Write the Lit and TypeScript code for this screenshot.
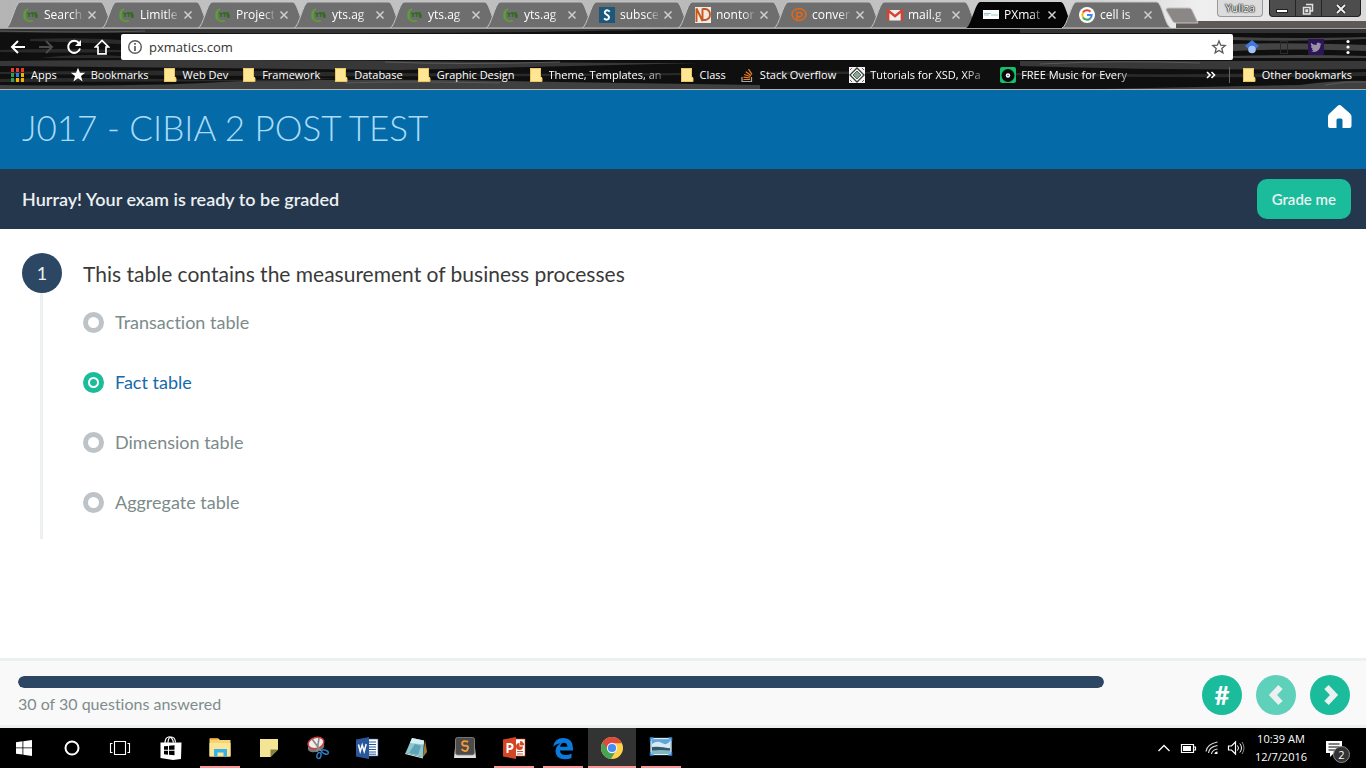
import { LitElement, html, svg, css, TemplateResult } from "lit";
import { customElement, state } from "lit/decorators.js";
import { classMap } from "lit/directives/class-map.js";

const icon = (w: number, h: number, body: TemplateResult | TemplateResult[]) =>
  html`<svg width=${w} height=${h} viewBox="0 0 ${w} ${h}" aria-hidden="true">${body}</svg>`;

const yts = icon(16, 16, svg`
  <path d="M5 2 A6.4 6.4 0 0 0 4 13.4 Q7 15 10 13.8" fill="none" stroke="#5aa52c" stroke-width="1.4"/>
  <path d="M2.6 4.5 A6 6 0 0 0 2.4 10.6" fill="none" stroke="#5aa52c" stroke-width="1.2"/>
  <path d="M4.4 5.6l1.6 2v2.4M7.5 5.6l-1.5 2M8 6h3M9.500 6v4M14 6h-2v2h2v2h-2.400" fill="none" stroke="#2f6b1c" stroke-width="1.400"/>`);
const subscene = icon(16, 16, svg`
  <rect width="16" height="16" fill="#1b587b"/>
  <path d="M10.800 4.600Q8 2.200 6.100 4.400Q5 6.500 8 7.800Q11 9.500 9.600 11.800Q7.500 13.600 5 11.600" fill="none" stroke="#fff" stroke-width="1.900"/>`);
const nd = icon(16, 16, svg`
  <rect width="16" height="16" fill="#eeeae6"/>
  <path d="M1.500 15V1.500L7.500 14V1.500M7.500 2h3q4.500 1 4.500 5.500T10.500 13H7.500" fill="none" stroke="#c9571c" stroke-width="1.900"/>`);
const conver = icon(16, 16, svg`
  <ellipse cx="8" cy="7.500" rx="7" ry="5.800" fill="none" stroke="#d9691c" stroke-width="1.700"/>
  <path d="M6 13.500V5.500h3q2.500.3 2 2.400t-3 1.900H6" fill="none" stroke="#d9691c" stroke-width="1.700"/>`);
const gmail = icon(16, 16, svg`
  <path d="M1 3h14v10.500H1z" fill="#f0f0f0"/>
  <path d="M1.200 14V3.500L8 9.200l6.800-5.700V14" fill="none" stroke="#d8412f" stroke-width="2.300"/>`);
const px = icon(16, 16, svg`
  <rect y="3" width="16" height="9" fill="#fff"/>
  <path d="M1 6.500h7M1 8h5M8 8h7" stroke="#9cc5c8" stroke-width="1"/>`);
const google = icon(16, 16, svg`
  <circle cx="8" cy="8" r="8" fill="#fff"/>
  <path d="M11.500 4.800A4.700 4.700 0 0 0 4 5.600" fill="none" stroke="#ea4335" stroke-width="2"/>
  <path d="M4 5.600A4.800 4.800 0 0 0 4 10.400" fill="none" stroke="#fbbc05" stroke-width="2"/>
  <path d="M4 10.400A4.700 4.700 0 0 0 11.200 11.400" fill="none" stroke="#34a853" stroke-width="2"/>
  <path d="M8 8h4.700q0 2-1.500 3.400" fill="none" stroke="#4285f4" stroke-width="2"/>`);

const folder = icon(16, 16, svg`
  <path d="M2 1h11v9h1v5H2z" fill="#ffe694"/>
  <path d="M2.500 1.500h10v8.500q1.500 0 1.500 1.500v3H2.500z" fill="none" stroke="#e9c75c" stroke-width="1"/>`);
const apps = icon(16, 16, [
  ["#e53935", 1, 1], ["#e53935", 6, 1], ["#e53935", 11, 1],
  ["#2e9e56", 1, 6], ["#2f7de1", 6, 6], ["#f0b400", 11, 6],
  ["#2e9e56", 1, 11], ["#f0b400", 6, 11], ["#f0b400", 11, 11],
].map(([c, x, y]) => svg`<rect x=${x} y=${y} width="3" height="4" fill=${c}/>`));
const starSolid = icon(16, 16, svg`<path d="M8 .8l2 5h5.200l-4.200 3.300 1.600 5.300L8 11.200l-4.600 3.200L5 9.100.8 5.800H6z" fill="#fff"/>`);
const stack = icon(16, 16, svg`
  <path d="M3 10v4.500h9.500V10" fill="none" stroke="#a9a9a9" stroke-width="1.200"/>
  <path d="M4.500 12.500h6.500M4.600 10.200l6.500.8M5.200 7.500l6.200 2M6.800 4.700l5.400 3.700M9.500 2.200l3.500 5.200" stroke="#f48024" stroke-width="1.200"/>`);
const xsd = icon(16, 16, svg`
  <rect width="16" height="16" fill="#f4f4f4"/>
  <path d="M8 1l7 7-7 7-7-7z" fill="#fff" stroke="#3b3b3b" stroke-width="1.300"/>
  <path d="M8 4l4 4-4 4-4-4z" fill="#8ba394" stroke="#4c6b59"/><path d="M1 3l2-2M13 1l2 2M1 13l2 2M13 15l2-2" stroke="#666"/>`);
const music = icon(16, 16, svg`
  <rect width="16" height="16" rx="2" fill="#16c06a"/>
  <circle cx="8" cy="8.500" r="6.500" fill="#0a0a0a"/><circle cx="8" cy="8.500" r="2.200" fill="#fff"/><circle cx="8" cy="8.500" r=".7" fill="#222"/>`);

interface Tab { title: string; icon: TemplateResult; active?: boolean }
const TABS: Tab[] = [
  { title: "Search", icon: yts }, { title: "Limitle", icon: yts }, { title: "Project", icon: yts },
  { title: "yts.ag", icon: yts }, { title: "yts.ag", icon: yts }, { title: "yts.ag", icon: yts },
  { title: "subsce", icon: subscene }, { title: "nontor", icon: nd }, { title: "conver", icon: conver },
  { title: "mail.g", icon: gmail }, { title: "PXmat", icon: px, active: true }, { title: "cell is", icon: google },
];

const BOOKMARKS: [string, TemplateResult][] = [
  ["Apps", apps], ["Bookmarks", starSolid], ["Web Dev", folder], ["Framework", folder],
  ["Database", folder], ["Graphic Design", folder], ["Theme, Templates, an", folder], ["Class", folder],
  ["Stack Overflow", stack], ["Tutorials for XSD, XPa", xsd], ["FREE Music for Every", music],
];

@customElement("browser-chrome")
class BrowserChrome extends LitElement {
  static styles = css`
    :host { display: block; font: 12px/16px "Open Sans", "Noto Sans", sans-serif; color: #fff; position: relative; background: #0a0a0a; border-bottom: 1px solid #b4b2b0; }
    button, input { font: inherit; color: inherit; background: none; border: 0; padding: 0; margin: 0; }
    svg { display: block; flex: none; }
    .grain { position: absolute; left: 0; top: 29px; width: 100%; height: 60px; }
    .strip { display: flex; height: 28px; padding-left: 6px; background: linear-gradient(90deg, #b4b4b4, #c4c4c4 20%, #b8b8b8 55%, #d2d2d2 80%, #efefef 88%, #dadada); border-bottom: 1px solid #a5a3a1; position: relative; overflow: hidden; }
    .ledge { position: absolute; right: 0; bottom: 0; width: 190px; height: 7px; background: #5e5956; }
    .tab { position: relative; flex: none; width: 96px; height: 28px; display: flex; align-items: center; padding: 2px 0 0 17px; box-sizing: border-box; }
    .shape { position: absolute; left: 0; top: 1px; }
    .label { margin-left: 5px; width: 38px; flex: none; white-space: nowrap; position: relative; -webkit-mask-image: linear-gradient(90deg, #000 70%, rgba(0, 0, 0, 0.2)); }
    .favicon { position: relative; }
    .close { position: relative; margin-left: 3px; width: 14px; height: 14px; flex: none; }
    .newtab { position: relative; align-self: flex-start; margin: 7px 0 0 7px; }
    .window { position: absolute; right: 5px; top: 0; display: flex; gap: 6px; align-items: flex-start; }
    .user { height: 17px; width: 46px; border: 1px solid #999; border-top: 0; border-radius: 0 0 4px 4px; color: #fff; font-size: 11px; line-height: 14px; background: #dcdcdc; text-shadow: 0 0 1px #000, 0 0 1px #000, 0 0 2px #000; }
    .controls { display: flex; background: #4d4d4d; border: 1px solid #222; border-top: 0; border-radius: 0 0 4px 4px; height: 16px; }
    .controls button + button { border-left: 1px solid #252525; }
    .toolbar { display: flex; align-items: center; height: 36px; padding: 0 10px; position: relative; }
    .nav { display: flex; gap: 12px; margin-right: 11px; }
    .address { flex: 1; display: flex; align-items: center; height: 26px; background: #fff; border-radius: 2px; padding: 0 6px; gap: 6px; }
    .address input { flex: 1; min-width: 0; color: #333; font-size: 13px; outline: 0; }
    .tools { display: flex; align-items: center; gap: 16px; margin-left: 11px; }
    .bookmarks { display: flex; align-items: center; height: 20px; padding: 0 14px 4px 10px; position: relative; gap: 13px; font-size: 11px; }
    .bookmark { color: inherit; text-decoration: none; display: flex; align-items: center; gap: 5px; white-space: nowrap; }
    .name.long { width: 117px; -webkit-mask-image: linear-gradient(90deg, #000 80%, rgba(0, 0, 0, 0.2)); }
    .more { margin-left: auto; }
    .divider { width: 1px; height: 16px; background: #666; margin-right: -2px; }
  `;

  tab(t: Tab) {
    const fill = t.active ? "#050505" : "#6e6e6e";
    return html`<div class="tab">
      <svg class="shape" width="109" height="27" viewBox="0 0 109 27" aria-hidden="true">
        <path d="M0 27C5 26 9 2 14 1H95C100 2 103 25 109 27z" fill=${fill} stroke=${t.active ? "none" : "#c4c4c4"} stroke-width="1"/>
      </svg>
      <span class="favicon">${t.icon}</span><span class="label">${t.title}</span>
      <button class="close" aria-label="Close tab">${icon(14, 14, svg`<path d="M3.500 3.500l7 7M10.500 3.500l-7 7" stroke="#d0d0d0" stroke-width="1.500"/>`)}</button>
    </div>`;
  }

  bookmark([name, glyph]: [string, TemplateResult]) {
    return html`<a class="bookmark" href="#">${glyph}<span class=${classMap({ name: true, long: name.length > 16 })}>${name}</span></a>`;
  }

  render() {
    return html`
      <svg class="grain" viewBox="0 0 1366 60" preserveAspectRatio="none" aria-hidden="true">
        <rect width="1366" height="60" fill="#0f0f0f"/>
        <path d="M0 0H690Q500 5 200 4T0 3zM1020 0H1366V4H1020z" fill="#333"/>
        <path d="M0 32Q180 30 400 32T700 34L400 41 0 37zM1020 32H1366V40Q1180 42 1020 37z" fill="#383838"/>
        <path d="M240 52Q400 49 560 53L760 56V60H0V56Q150 58 240 52zM1300 56Q1340 51 1366 52V60H1100z" fill="#404040"/>
        <g fill="#2a2a2a">
          <path d="M30 10Q80 8 121 11V15Q60 13 30 12zM0 21Q60 19 121 21V23Q60 24 0 23zM60 27Q90 25 121 27V29H40z"/>
          <path d="M0 43Q160 40 330 43T690 44V46Q400 49 0 45zM0 50Q90 48 160 50T340 49L300 52 0 53zM760 43Q840 41 900 44L780 46zM1010 44Q1150 47 1366 43V47Q1190 50 1010 46z"/>
        </g>
        <g fill="#444">
          <path d="M1233 8Q1290 10 1366 8V10Q1300 13 1233 11zM1233 15Q1290 13 1366 16V22Q1300 19 1233 22zM1233 27Q1300 25 1366 27V29H1233z"/>
        </g>
        <g fill="none" stroke="#5a5a5a" stroke-width="1">
          <path d="M0 2Q90 4 145 2M385 33Q460 36 560 33M1040 35Q1120 31 1200 34M345 54Q400 52 500 54M1325 56Q1345 52 1366 53"/>
        </g>
      </svg>
      <div class="strip">
        <div class="ledge"></div>
        ${TABS.map((t) => this.tab(t))}
        <button class="newtab" aria-label="New tab">${icon(34, 17, svg`<path d="M3 1h21q2 0 3 2l6 13H11q-3 0-4-3L1 3q0-2 2-2z" fill="#8b8787" stroke="#c2c2c2"/>`)}</button>
        <div class="window">
          <button class="user">Yuliza</button>
          <div class="controls">
            <button aria-label="Minimize">${icon(25, 15, svg`<rect x="6.500" y="8.500" width="11" height="3" fill="#fff" stroke="#222"/>`)}</button>
            <button aria-label="Restore">${icon(25, 15, svg`<path d="M10 3.500h6.500V10H14M7.500 6.500H14V13H7.500zM10 9h1.500v1.500H10z" fill="none" stroke="#e2e2e2" stroke-width="1.500"/>`)}</button>
            <button aria-label="Close">${icon(38, 15, svg`<path d="M15 4l8 8M23 4l-8 8" stroke="#222" stroke-width="3.600"/><path d="M15 4l8 8M23 4l-8 8" stroke="#eee" stroke-width="2"/>`)}</button>
          </div>
        </div>
      </div>
      <div class="toolbar">
        <div class="nav">
          <button aria-label="Back">${icon(16, 16, svg`<path d="M15 8H2M8 2L2 8l6 6" fill="none" stroke="#fff" stroke-width="2"/>`)}</button>
          <button aria-label="Forward">${icon(16, 16, svg`<path d="M1 8h13M8 2l6 6-6 6" fill="none" stroke="#4b4b4b" stroke-width="2"/>`)}</button>
          <button aria-label="Reload">${icon(16, 16, svg`<path d="M13 4.200A6 6 0 1 0 14 9.500" fill="none" stroke="#fff" stroke-width="2"/><path d="M15 1v6H9z" fill="#fff"/>`)}</button>
          <button aria-label="Home">${icon(16, 16, svg`<path d="M8 1.500L1.500 8H4v6.800h8V8h2.500z" fill="none" stroke="#fff" stroke-width="1.700"/>`)}</button>
        </div>
        <div class="address">
          ${icon(16, 16, svg`<circle cx="8" cy="8" r="6.300" fill="none" stroke="#5a5a5a" stroke-width="1.400"/><path d="M8 7v5M8 4v1.700" stroke="#5a5a5a" stroke-width="1.700"/>`)}
          <input aria-label="Address" value="pxmatics.com">
          ${icon(16, 16, svg`<path d="M8 2l1.700 4.200 4.500.3-3.400 2.900 1.100 4.400L8 11.400l-3.900 2.400 1.100-4.400L1.800 6.500l4.500-.3z" fill="none" stroke="#5a5a5a" stroke-width="1.300"/>`)}
        </div>
        <div class="tools">
          <button aria-label="Scholar">${icon(16, 16, svg`<path d="M8 1l7 6-7 6-7-6z" fill="#3f78d8"/><circle cx="8" cy="10.500" r="3.800" fill="#a3c2f9"/>`)}</button>
          <button aria-label="Reader">${icon(16, 16, svg`<rect x="4.500" y="2.500" width="7" height="12" fill="none" stroke="#2a2a2a"/>`)}</button>
          <button aria-label="Twitter">${icon(16, 16, svg`<rect width="16" height="16" rx="1" fill="#2b1557"/><path d="M3 12q5 2.500 8-1.500 1.700-2 1.500-4.500l1.200-1.400-1.500.2Q10.500 2.800 8.800 4.200L8.400 6Q5 6 3 3.800q-.8 2 1 3.700L2.800 7q.2 2 2 2.900H3.700q.6 1.300 1.900 1.500Q4.500 12 3 12z" fill="#9a91a8"/>`)}</button>
          <button aria-label="Menu">${icon(16, 16, svg`<g fill="#fff"><circle cx="8" cy="2.500" r="1.600"/><circle cx="8" cy="8" r="1.600"/><circle cx="8" cy="13.500" r="1.600"/></g>`)}</button>
        </div>
      </div>
      <nav class="bookmarks">
        ${BOOKMARKS.map((b) => this.bookmark(b))}
        <button class="more" aria-label="More bookmarks">${icon(10, 10, svg`<path d="M1 2l3 3-3 3M5.500 2l3 3-3 3" fill="none" stroke="#fff" stroke-width="1.600"/>`)}</button>
        <span class="divider"></span>
        ${this.bookmark(["Other bookmarks", folder])}
      </nav>`;
  }
}

@customElement("exam-page")
class ExamPage extends LitElement {
  @state() selected = 1;
  options = ["Transaction table", "Fact table", "Dimension table", "Aggregate table"];

  static styles = css`
    :host { display: flex; flex-direction: column; flex: 1; font-family: Lato, sans-serif; font-variant-ligatures: none; background: #fff; }
    button { font: inherit; border: 0; padding: 0; cursor: pointer; }
    svg { display: block; }
    .title { display: flex; align-items: flex-start; justify-content: space-between; background: #056aa8; padding: 15px 14px 20px 22px; }
    h1 { margin: 0; font-weight: 300; font-size: 35px; line-height: 44px; color: #a9dcf8; }
    .banner { display: flex; align-items: center; justify-content: space-between; background: #25374d; padding: 10px 15px 10px 22px; color: #ecf0f1; font-size: 18px; line-height: 24px; font-weight: 600; }
    .grade { background: #1abc9c; color: #ecf0f1; border-radius: 10px; padding: 8px 15px; font-size: 15px; line-height: 24px; font-weight: 600; }
    main { flex: 1; padding: 24px 22px; }
    .question { display: grid; grid-template-columns: 40px 1fr; column-gap: 21px; }
    .rail { display: flex; flex-direction: column; }
    .number { width: 40px; height: 40px; border-radius: 50%; background: #2c4764; color: #ecf0f1; display: grid; place-items: center; font-size: 18px; }
    .line { flex: 1; width: 3px; margin-left: 18px; background: #ecf0f1; }
    fieldset { border: 0; margin: 0; padding: 0 0 7px; min-width: 0; }
    legend { padding: 6px 0 3px; font-size: 21px; line-height: 30px; color: #3a3a3a; }
    .option { display: flex; align-items: center; gap: 11px; height: 60px; color: #7b8b8a; font-size: 18px; line-height: 24px; }
    .option.on { color: #1569ad; }
    .option input { appearance: none; box-sizing: border-box; margin: 0; width: 21px; height: 21px; border-radius: 50%; border: 5px solid #bdc3c7; background: #fff; }
    .option input:checked { border-color: #1abc9c; background: radial-gradient(circle, #1abc9c 3px, #fff 4px); background-clip: padding-box; }
    footer { display: flex; align-items: center; justify-content: space-between; background: #f9f9f9; border-top: 3px solid #ecf0f1; border-bottom: 3px solid #ecf0f1; padding: 14px 16px 10px 18px; }
    .progress { flex: 1; margin-right: 98px; color: #7f8c8d; font-size: 16px; line-height: 20px; }
    .track { height: 12px; border-radius: 6px; overflow: hidden; background: #e4e8e9; margin-bottom: 6px; }
    .bar { height: 100%; border-radius: 6px; background: #2c4764; }
    .pager { display: flex; gap: 14px; }
    .round { width: 40px; height: 40px; border-radius: 50%; background: #1abc9c; color: #fff; display: grid; place-items: center; font-size: 26px; line-height: 32px; font-weight: 700; }
    .round:disabled { background: #5fd0b9; }
  `;

  render() {
    const answered = 30, total = 30;
    return html`
      <header class="title">
        <h1>J017 - CIBIA 2 POST TEST</h1>
        <a href="#" aria-label="Home">${icon(25, 24, svg`<path d="M12.500 0q1 0 2 1l8.500 7.500q1.500 1.500 1.500 3V21q0 2-2 2H15.500V15q0-1.500-1.500-1.500h-3Q9.500 13.500 9.500 15v8H3q-2 0-2-2v-9.500q0-1.500 1.500-3L10.500 1q1-1 2-1z" fill="#fff"/>`)}</a>
      </header>
      <section class="banner"><span>Hurray! Your exam is ready to be graded</span><button class="grade">Grade me</button></section>
      <main>
        <div class="question">
          <div class="rail"><span class="number">1</span><span class="line"></span></div>
          <fieldset>
            <legend>This table contains the measurement of business processes</legend>
            ${this.options.map((o, i) => html`<label class=${classMap({ option: true, on: i === this.selected })}>
              <input type="radio" name="answer" .checked=${i === this.selected} @change=${() => (this.selected = i)}>${o}</label>`)}
          </fieldset>
        </div>
      </main>
      <footer>
        <div class="progress">
          <div class="track" role="progressbar" aria-valuenow=${answered} aria-valuemax=${total} aria-label="Answered"><div class="bar" style="width:${(answered / total) * 100}%"></div></div>
          ${answered} of ${total} questions answered
        </div>
        <div class="pager">
          <button class="round">#</button>
          <button class="round" disabled aria-label="Previous">${icon(20, 24, svg`<path d="M14.500 4L7 12l7.500 8" fill="none" stroke="#ecf0f1" stroke-width="6"/>`)}</button>
          <button class="round" aria-label="Next">${icon(20, 24, svg`<path d="M6.500 4l7.500 8L6.500 20" fill="none" stroke="#ecf0f1" stroke-width="6"/>`)}</button>
        </div>
      </footer>`;
  }
}

const office = (color: string, letter: TemplateResult, page: TemplateResult) => icon(24, 24, svg`
  <rect x="12" y="3" width="11" height="17" fill="#fff" stroke=${color} stroke-width=".6"/>${page}
  <path d="M1 3.500L14 1v22L1 20.500z" fill=${color}/>${letter}`);

interface App { name: string; icon: TemplateResult; open?: boolean; active?: boolean }
const SYSTEM: App[] = [
  { name: "Start", icon: icon(24, 24, svg`<path d="M4 6.200l6.500-.9V11.500H4zM11.300 5.200L20 4v7.500h-8.700zM4 12.300h6.500v6.300L4 17.700zM11.300 12.300H20V20l-8.700-1.200z" fill="#fff"/>`) },
  { name: "Cortana", icon: icon(24, 24, svg`<circle cx="12" cy="12" r="6.500" fill="none" stroke="#fff" stroke-width="2"/>`) },
  { name: "Task view", icon: icon(24, 24, svg`<path d="M6.500 5.500h11v13h-11zM4.500 7.500h-2v9h2M19.500 7.500h2v9h-2" fill="none" stroke="#fff" stroke-width="1.100"/>`) },
];
const APPS: App[] = [
  { name: "Store", icon: icon(24, 24, svg`<path d="M1.500 6.500h21l-.5 16.500-8 1-12.500-2z" fill="#fff"/><path d="M6 7.500Q6 1.500 9.500 1t5 5.500M9 7Q9 1 12.500 1T16.500 6.500" fill="none" stroke="#fff" stroke-width="1.200"/><path d="M5 10.300l4-.4v3.900H5zM10 9.800l5.500-.5v4.500H10zM5 14.800h4v3.900l-4-.4zM10 14.800h5.500v4.500l-5.500-.5z" fill="#000"/>`) },
  { name: "File Explorer", open: true, icon: icon(24, 24, svg`<path d="M1.500 4V2.500h9L12 4h10.500v16.500h-21z" fill="#f6d472"/><path d="M1.500 7h21v13.500h-21z" fill="#fde597"/><path d="M2 3h8" stroke="#f2a93b" stroke-width="1.500"/><path d="M6 20.500V13h13v7.500h-3.500v-4h-6v4z" fill="#34b3ea"/>`) },
  { name: "Sticky Notes", icon: icon(24, 24, svg`<path d="M3 3h18v10.500L13.500 21H3z" fill="#f3e595"/><path d="M13.500 21v-7.500H21z" fill="#87803f"/>`) },
  { name: "Snipping Tool", icon: icon(24, 24, svg`<ellipse cx="10" cy="11" rx="8.500" ry="5" fill="#777" transform="rotate(-15 10 11)"/><ellipse cx="10" cy="7" rx="8" ry="5.500" fill="#eee" stroke="#d43c3c" stroke-width="1.500" transform="rotate(-15 10 7)"/><path d="M6 3l9 12M13 2l-2 14" stroke="#888" stroke-width="1.600"/><ellipse cx="13" cy="19.500" rx="2" ry="3" fill="none" stroke="#2d7bc4" stroke-width="1.500" transform="rotate(15 13 19.500)"/><ellipse cx="19" cy="16" rx="3.500" ry="1.800" fill="none" stroke="#2d7bc4" stroke-width="1.500" transform="rotate(20 19 16)"/>`) },
  { name: "Word", icon: office("#2a569a", svg`<path d="M3.500 8.500l1.700 7 2-6.500 2 6.500 2-7.500" fill="none" stroke="#fff" stroke-width="1.500"/>`, svg`<path d="M14 6h7M14 8.500h7M14 11h7M14 13.500h7M14 16h7M14 18.200h7" stroke="#2a569a" stroke-width="1"/>`) },
  { name: "Notepad", icon: icon(24, 24, svg`<path d="M21 4l2 12-4 5z" fill="#a2793b"/><path d="M8 2l12 2.500L19 21.500 1.500 17z" fill="#8cc6d1"/><path d="M8 2l12 2.500-.3 4L6 7z" fill="#d8eef0"/><path d="M11 8l6 2-3 9-9-2z" fill="#5da3b5"/><path d="M1.500 17L19 21.500v1L1 18z" fill="#dfe8e8"/>`) },
  { name: "Sublime Text", icon: icon(24, 24, svg`<path d="M3 2h18l2 20H1z" fill="#e2e2e2"/><rect x="2.500" y="1.500" width="19" height="17.500" rx="2" fill="#4b4b4b" stroke="#888" stroke-width=".8"/><path d="M15.200 5.800Q9.500 4 9.200 7T12.500 9.700t2.200 3.500T8.500 13.300" fill="none" stroke="#f39a34" stroke-width="2"/>`) },
  { name: "PowerPoint", open: true, icon: office("#d24625", svg`<path d="M5.500 17V8h2.700q2.500.4 2.300 2.700T7.500 13h-2" fill="none" stroke="#fff" stroke-width="2"/>`, svg`<path d="M17.500 7v3.500H21A3.500 3.500 0 1 1 17.500 7z" fill="#d24625"/><path d="M18.500 5.500V9H21.500A3 3 0 0 0 18.500 5.500zM15 15.500h6M15 18h6" fill="#d24625" stroke="#d24625" stroke-width=".9"/>`) },
  { name: "Edge", open: true, icon: icon(24, 24, svg`<path d="M2 11Q3.500 2 12.500 2 22 2.500 22 12.500v2H9q.3 4.300 5.500 4.500 3.500 0 6-1.500V22q-3 1.500-7.500 1.300Q4.500 22.500 4.500 15q.2-5.500 5-7.500Q5 7.500 2 11zM9 10.800h7.500Q16 6.700 13 6.700T9 10.800z" fill="#0a7bdc"/>`) },
  { name: "Chrome", open: true, active: true, icon: icon(24, 24, svg`<circle cx="12" cy="12" r="11" fill="#fdd24a"/><path d="M12 12L2.500 6.500A11 11 0 0 0 11 23l5-8.500z" fill="#4aa355"/><path d="M2.500 6.500A11 11 0 0 1 22 7.300H12L7.500 13z" fill="#dd4b3e"/><circle cx="12" cy="12" r="5.200" fill="#f4f4f4"/><circle cx="12" cy="12" r="4.100" fill="#4a8af4"/>`) },
  { name: "Photo Viewer", open: true, icon: icon(24, 24, svg`<rect x="2" y="2.500" width="20" height="16" fill="#5ba6dc" stroke="#dceaf4" stroke-width="1.300"/><path d="M3 8q5-4 10-1t8-2v7H3z" fill="#d5eaf5"/><path d="M3 11q8-1 18 1.500v3H3z" fill="#35596a"/><path d="M3 14.500q9-1 18 0V18H3z" fill="#7fb7c0"/><path d="M1.500 5V2h3M19.500 2h3v3M1.500 16v3h3M19.500 19h3v-3" fill="none" stroke="#2f86d6" stroke-width="1.500"/>`) },
];

@customElement("task-bar")
class TaskBar extends LitElement {
  static styles = css`
    :host { display: flex; justify-content: space-between; height: 40px; background: #000; color: #fff; font: 12px/18px "Open Sans", "Noto Sans", sans-serif; }
    button { font: inherit; color: inherit; background: none; border: 0; padding: 0; margin: 0; }
    svg { display: block; }
    .system, .apps, .tray { display: flex; }
    .apps { gap: 1px; margin-left: 3px; }
    .left { display: flex; }
    .item { width: 48px; height: 40px; display: grid; place-items: center; box-sizing: border-box; border: solid transparent; border-width: 0 4px; }
    .item.open { background: linear-gradient(#ff9494, #ff9494) bottom / 100% 2px no-repeat; }
    .item.active { border-width: 0; background-color: #333; }
    .tray { align-items: center; gap: 8px; padding-right: 23px; }
    .clock { text-align: center; width: 56px; white-space: nowrap; display: flex; flex-direction: column; align-items: center; font-size: 11px; }
    .notes { margin-left: 8px; position: relative; }
    .count { position: absolute; left: 8px; top: 7px; width: 15px; height: 15px; border-radius: 50%; border: 1px solid #8c8c8c; background: #333; font-size: 11px; line-height: 15px; text-align: center; }
  `;

  item(a: App) {
    return html`<button class=${classMap({ item: true, open: !!a.open, active: !!a.active })} aria-label=${a.name}>${a.icon}</button>`;
  }

  render() {
    return html`
      <div class="left">
        <div class="system">${SYSTEM.map((a) => this.item(a))}</div>
        <div class="apps">${APPS.map((a) => this.item(a))}</div>
      </div>
      <div class="tray">
        <button aria-label="Show hidden icons">${icon(14, 16, svg`<path d="M1.500 11L7 5.500l5.500 5.500" fill="none" stroke="#fff" stroke-width="1.300"/>`)}</button>
        ${icon(18, 16, svg`<path d="M2.500 4.500h12v8h-12zM15 7h1.500v3H15" fill="none" stroke="#fff" stroke-width="1.200"/><rect x="4" y="6" width="8" height="5" fill="#fff"/>`)}
        ${icon(14, 16, svg`<path d="M1 11.500Q2 4 12.500 2M3.500 13Q4 7 12.500 5.500M6.500 14Q7 10 12.500 9" fill="none" stroke="#ddd" stroke-width="1.200"/><path d="M9.500 14q0-2.500 3-2.500V14z" fill="#fff"/>`)}
        ${icon(18, 16, svg`<path d="M1.500 6h3l4-4v12l-4-4h-3z" fill="none" stroke="#fff" stroke-width="1.200"/><path d="M10.500 5.500q2 2.500 0 5M12.800 3.500q3.400 4.500 0 9" fill="none" stroke="#fff"/><path d="M15 2q4 6 0 12" fill="none" stroke="#888"/>`)}
        <div class="clock"><span>10:39 AM</span><span>12/7/2016</span></div>
        <button class="notes" aria-label="Notifications">${icon(18, 18, svg`<path d="M1 2h16v12H9l-4 4v-4H1z" fill="#fff"/><path d="M3.500 5h11M3.500 8h11M3.500 11h11" stroke="#000" stroke-width="1.200"/>`)}<span class="count">2</span></button>
      </div>`;
  }
}

@customElement("app-root")
class AppRoot extends LitElement {
  static styles = css`
    :host { display: flex; flex-direction: column; min-height: 100vh; }
  `;
  render() {
    return html`<browser-chrome></browser-chrome><exam-page></exam-page><task-bar></task-bar>`;
  }
}
